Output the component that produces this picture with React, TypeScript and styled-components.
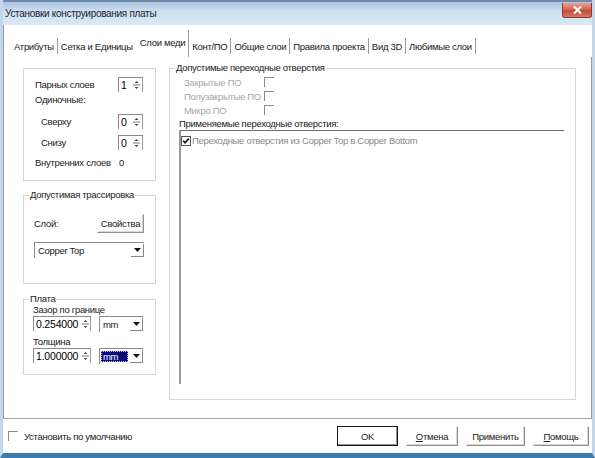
import styled, { createGlobalStyle } from "styled-components";

const GlobalStyle = createGlobalStyle`
    html, body {
        margin: 0;
        padding: 0;
        background: #ffffff;
    }
    body {
        font-family: "Liberation Sans", Arial, sans-serif;
    }
`;

const Window = styled.div`
    width: 595px;
    height: 458px;
    box-sizing: border-box;
    display: flex;
    flex-direction: column;
    background: #ffffff;
    border-left: 3px solid #c4d6ea;
    border-right: 3px solid #c4d6ea;
    border-bottom: 5px solid #3b7bae;
    overflow: hidden;
    font-size: 9.5px;
    letter-spacing: -0.3px;
    color: #000;
`;

const TitleBar = styled.div`
    height: 23px;
    margin: 0 -3px;
    padding: 0 3px 0 5px;
    display: flex;
    align-items: center;
    justify-content: space-between;
    background: linear-gradient(180deg, #a9c4e0 0%, #cfe0f1 40%, #dbe8f5 100%);
    border-top: 2px solid #6f8aa6;
    font-size: 10px;
    color: #1b2530;
`;

const CloseButton = styled.div`
    width: 28px;
    height: 14px;
    margin-top: -6px;
    display: flex;
    align-items: center;
    justify-content: center;
    border-radius: 0 0 3px 3px;
    border: 1px solid #8a3a32;
    border-top: none;
    background: linear-gradient(180deg, #e8a090 0%, #d46a58 45%, #c04a38 55%, #d87a62 100%);
`;

const TabStrip = styled.div`
    height: 32px;
    display: flex;
    align-items: flex-end;
    padding-left: 7px;
    border-left: 1px solid #9a9a9a;
`;

const Tab = styled.div<{ $active?: boolean; $noSep?: boolean }>`
    height: ${p => (p.$active ? 24 : 16)}px;
    margin-bottom: ${p => (p.$active ? 0 : 3)}px;
    padding: 0 3px ${p => (p.$active ? 3 : 0)}px;
    display: flex;
    align-items: center;
    border-right: 1px solid ${p => (p.$noSep ? "transparent" : "#9c9c9c")};
    color: #1a1a1a;
    white-space: nowrap;
`;

const TabPage = styled.div`
    height: 362px;
    display: flex;
    align-items: flex-start;
    padding: 11px 0 0 19px;
    box-sizing: border-box;
    border-left: 1px solid #9a9a9a;
    border-right: 1px solid #9a9a9a;
    border-bottom: 1px solid #a4a4a4;
`;

const LeftColumn = styled.div`
    width: 133px;
    display: flex;
    flex-direction: column;
`;

const Group = styled.div<{ $h: number; $top?: number; $w?: number }>`
    position: relative;
    box-sizing: border-box;
    width: ${p => (p.$w ? `${p.$w}px` : "100%")};
    height: ${p => p.$h}px;
    margin-top: ${p => p.$top ?? 0}px;
    border: 1px solid #d6d6d6;
    display: flex;
    flex-direction: column;
`;

const Caption = styled.span`
    position: absolute;
    top: -7px;
    left: 5px;
    padding: 0 1px;
    line-height: 12px;
    background: #ffffff;
    color: #1a1a1a;
`;

const Row = styled.div<{ $top?: number; $indent?: number; $h?: number }>`
    height: ${p => p.$h ?? 16}px;
    margin-top: ${p => p.$top ?? 0}px;
    padding-left: ${p => p.$indent ?? 0}px;
    display: flex;
    align-items: center;
`;

const Label = styled.span<{ $w?: number; $muted?: boolean }>`
    width: ${p => (p.$w ? `${p.$w}px` : "auto")};
    flex-shrink: 0;
    color: ${p => (p.$muted ? "#a8a8a8" : "#1a1a1a")};
    white-space: nowrap;
`;

const Spin = styled.div<{ $w: number }>`
    width: ${p => p.$w}px;
    height: 15px;
    box-sizing: border-box;
    display: flex;
    align-items: stretch;
    border-top: 1px solid #8a8a8a;
    border-left: 1px solid #8a8a8a;
    background: #ffffff;
`;

const SpinValue = styled.span<{ $right?: boolean }>`
    flex: 1;
    display: flex;
    align-items: center;
    justify-content: ${p => (p.$right ? "flex-end" : "flex-start")};
    padding: 0 2px;
    font-size: 10.5px;
    letter-spacing: -0.2px;
`;

const SpinArrows = styled.span`
    width: 11px;
    display: flex;
    align-items: center;
    justify-content: center;
    border-right: 1px solid #9a9a9a;
`;

const Combo = styled.div<{ $w: number }>`
    width: ${p => p.$w}px;
    height: 16px;
    box-sizing: border-box;
    display: flex;
    align-items: stretch;
    border-top: 1px solid #8a8a8a;
    border-left: 1px solid #8a8a8a;
    background: #ffffff;
`;

const ComboValue = styled.span<{ $selected?: boolean }>`
    flex: 1;
    display: flex;
    align-items: center;
    margin: 2px 2px 2px 1px;
    padding-left: 2px;
    background: ${p => (p.$selected ? "#0a0a7a" : "transparent")};
    color: ${p => (p.$selected ? "#ffffff" : "#1a1a1a")};
    outline: ${p => (p.$selected ? "1px dotted #c8c8ff" : "none")};
    outline-offset: -1px;
`;

const ComboButton = styled.span`
    width: 13px;
    margin: 1px 0;
    display: flex;
    align-items: center;
    justify-content: center;
    border-right: 1px solid #8a8a8a;
    border-bottom: 1px solid #8a8a8a;
    box-sizing: border-box;
`;

const PushButton = styled.div<{ $w: number; $h?: number; $default?: boolean }>`
    width: ${p => p.$w}px;
    height: ${p => p.$h ?? 20}px;
    box-sizing: border-box;
    display: flex;
    align-items: center;
    justify-content: center;
    background: #ffffff;
    border: 1px solid ${p => (p.$default ? "#1a1a1a" : "transparent")};
    border-right-color: ${p => (p.$default ? "#1a1a1a" : "#8f8f8f")};
    border-bottom-color: ${p => (p.$default ? "#1a1a1a" : "#8f8f8f")};
    box-shadow: ${p =>
        p.$default ? "inset -1px -1px 0 #8f8f8f" : "inset -1px -1px 0 #d8d8d8"};
    color: #1a1a1a;
    white-space: nowrap;
`;

const Mnemonic = styled.span`
    text-decoration: underline;
`;

const Box = styled.span`
    width: 10px;
    height: 10px;
    box-sizing: border-box;
    flex-shrink: 0;
    border-top: 1px solid #8c8c8c;
    border-left: 1px solid #8c8c8c;
    background: #ffffff;
`;

const RightGroup = styled(Group)`
    margin-left: 13px;
    padding: 6px 11px 15px 9px;
`;

const ListBox = styled.div`
    flex: 1;
    margin-top: 0;
    border-top: 1px solid #6e6e6e;
    border-left: 2px solid #9a9a9a;
    padding: 4px 0 0 0;
    display: flex;
    flex-direction: column;
`;

const ListItem = styled.div`
    display: flex;
    align-items: center;
    gap: 1px;
    height: 11px;
    color: #8a8a8a;
    white-space: nowrap;
`;

const Footer = styled.div`
    flex: 1;
    display: flex;
    align-items: center;
    padding: 0 3px 0 5px;
`;

const FooterCheck = styled.div`
    display: flex;
    align-items: center;
    gap: 6px;
    flex: 1;
`;

const ButtonGroup = styled.div`
    display: flex;
    align-items: center;
    gap: 8px;
`;

function SpinArrowIcon() {
    return (
        <svg width="7" height="12" viewBox="0 0 7 12">
            <path d="M3.5 2 L5.5 4 L1.5 4 Z" fill="#444" />
            <line x1="0" y1="6" x2="7" y2="6" stroke="#777" strokeWidth="1" />
            <path d="M1.5 8 L5.5 8 L3.5 10 Z" fill="#444" />
        </svg>
    );
}

function DownArrowIcon() {
    return (
        <svg width="7" height="4" viewBox="0 0 7 4">
            <path d="M0 0 L7 0 L3.5 4 Z" fill="#111" />
        </svg>
    );
}

function CheckedBox() {
    return (
        <svg width="10" height="10" viewBox="0 0 10 10">
            <rect x="0.5" y="0.5" width="9" height="9" fill="#fff" stroke="#555" />
            <path d="M2.2 4.8 L4 6.8 L7.8 2.6" fill="none" stroke="#111" strokeWidth="1.6" />
        </svg>
    );
}

function CloseIcon() {
    return (
        <svg width="9" height="8" viewBox="0 0 9 8">
            <path d="M1 0.5 L8 7.5 M8 0.5 L1 7.5" stroke="#fff" strokeWidth="2" />
        </svg>
    );
}

function SpinBox({ value, width, right }: { value: string; width: number; right?: boolean }) {
    return (
        <Spin $w={width}>
            <SpinValue $right={right}>{value}</SpinValue>
            <SpinArrows>
                <SpinArrowIcon />
            </SpinArrows>
        </Spin>
    );
}

function ComboBox({ value, width, selected }: { value: string; width: number; selected?: boolean }) {
    return (
        <Combo $w={width}>
            <ComboValue $selected={selected}>{value}</ComboValue>
            <ComboButton>
                <DownArrowIcon />
            </ComboButton>
        </Combo>
    );
}

const tabs = [
    "Атрибуты",
    "Сетка и Единицы",
    "Слои меди",
    "Конт/ПО",
    "Общие слои",
    "Правила проекта",
    "Вид 3D",
    "Любимые слои",
];
const activeTab = 2;

const viaTypes = ["Закрытые ПО", "Полузакрытые ПО", "Микро ПО"];

export default function App() {
    return (
        <>
            <GlobalStyle />
            <Window>
                <TitleBar>
                    <span>Установки конструирования платы</span>
                    <CloseButton>
                        <CloseIcon />
                    </CloseButton>
                </TitleBar>

                <TabStrip>
                    {tabs.map((t, i) => (
                        <Tab key={t} $active={i === activeTab} $noSep={i === activeTab - 1}>
                            {t}
                        </Tab>
                    ))}
                </TabStrip>

                <TabPage>
                    <LeftColumn>
                        <Group $h={113} style={{ padding: "7px 0 0 11px" }}>
                            <Row>
                                <Label $w={83}>Парных слоев</Label>
                                <SpinBox value="1" width={25} />
                            </Row>
                            <Row $top={-1}>
                                <Label>Одиночные:</Label>
                            </Row>
                            <Row $top={6} $indent={6}>
                                <Label $w={77}>Сверху</Label>
                                <SpinBox value="0" width={25} />
                            </Row>
                            <Row $top={5} $indent={6}>
                                <Label $w={77}>Снизу</Label>
                                <SpinBox value="0" width={25} />
                            </Row>
                            <Row $top={4}>
                                <Label $w={84}>Внутренних слоев</Label>
                                <Label>0</Label>
                            </Row>
                        </Group>

                        <Group $h={89} $top={14} style={{ padding: "18px 0 0 10px" }}>
                            <Caption>Допустимая трассировка</Caption>
                            <Row $h={19}>
                                <Label $w={63}>Слой:</Label>
                                <PushButton $w={47} $h={19}>
                                    Свойства
                                </PushButton>
                            </Row>
                            <Row $top={9} $h={16}>
                                <ComboBox value="Copper Top" width={110} />
                            </Row>
                        </Group>

                        <Group $h={76} $top={15} style={{ padding: "3px 0 0 9px" }}>
                            <Caption>Плата</Caption>
                            <Row $h={12}>
                                <Label>Зазор по границе</Label>
                            </Row>
                            <Row $top={1} $h={15}>
                                <SpinBox value="0.254000" width={58} right />
                                <span style={{ width: 8 }} />
                                <ComboBox value="mm" width={44} />
                            </Row>
                            <Row $top={4} $h={12}>
                                <Label>Толщина</Label>
                            </Row>
                            <Row $top={1} $h={15}>
                                <SpinBox value="1.000000" width={58} right />
                                <span style={{ width: 8 }} />
                                <ComboBox value="mm" width={44} selected />
                            </Row>
                        </Group>
                    </LeftColumn>

                    <RightGroup $h={332} $w={407}>
                        <Caption>Допустимые переходные отверстия</Caption>
                        {viaTypes.map(v => (
                            <Row key={v} $h={14} $indent={5}>
                                <Label $w={80} $muted>
                                    {v}
                                </Label>
                                <Box />
                            </Row>
                        ))}
                        <Row $h={13} $top={0}>
                            <Label>Применяемые переходные отверстия:</Label>
                        </Row>
                        <ListBox>
                            <ListItem>
                                <CheckedBox />
                                <span>Переходные отверстия из Copper Top в Copper Bottom</span>
                            </ListItem>
                        </ListBox>
                    </RightGroup>
                </TabPage>

                <Footer>
                    <FooterCheck>
                        <Box />
                        <Label>Установить по умолчанию</Label>
                    </FooterCheck>
                    <ButtonGroup>
                        <PushButton $w={61} $default>
                            OK
                        </PushButton>
                        <PushButton $w={52}>
                            <Mnemonic>О</Mnemonic>тмена
                        </PushButton>
                        <PushButton $w={59}>Применить</PushButton>
                        <PushButton $w={56}>
                            <Mnemonic>П</Mnemonic>омощь
                        </PushButton>
                    </ButtonGroup>
                </Footer>
            </Window>
        </>
    );
}
